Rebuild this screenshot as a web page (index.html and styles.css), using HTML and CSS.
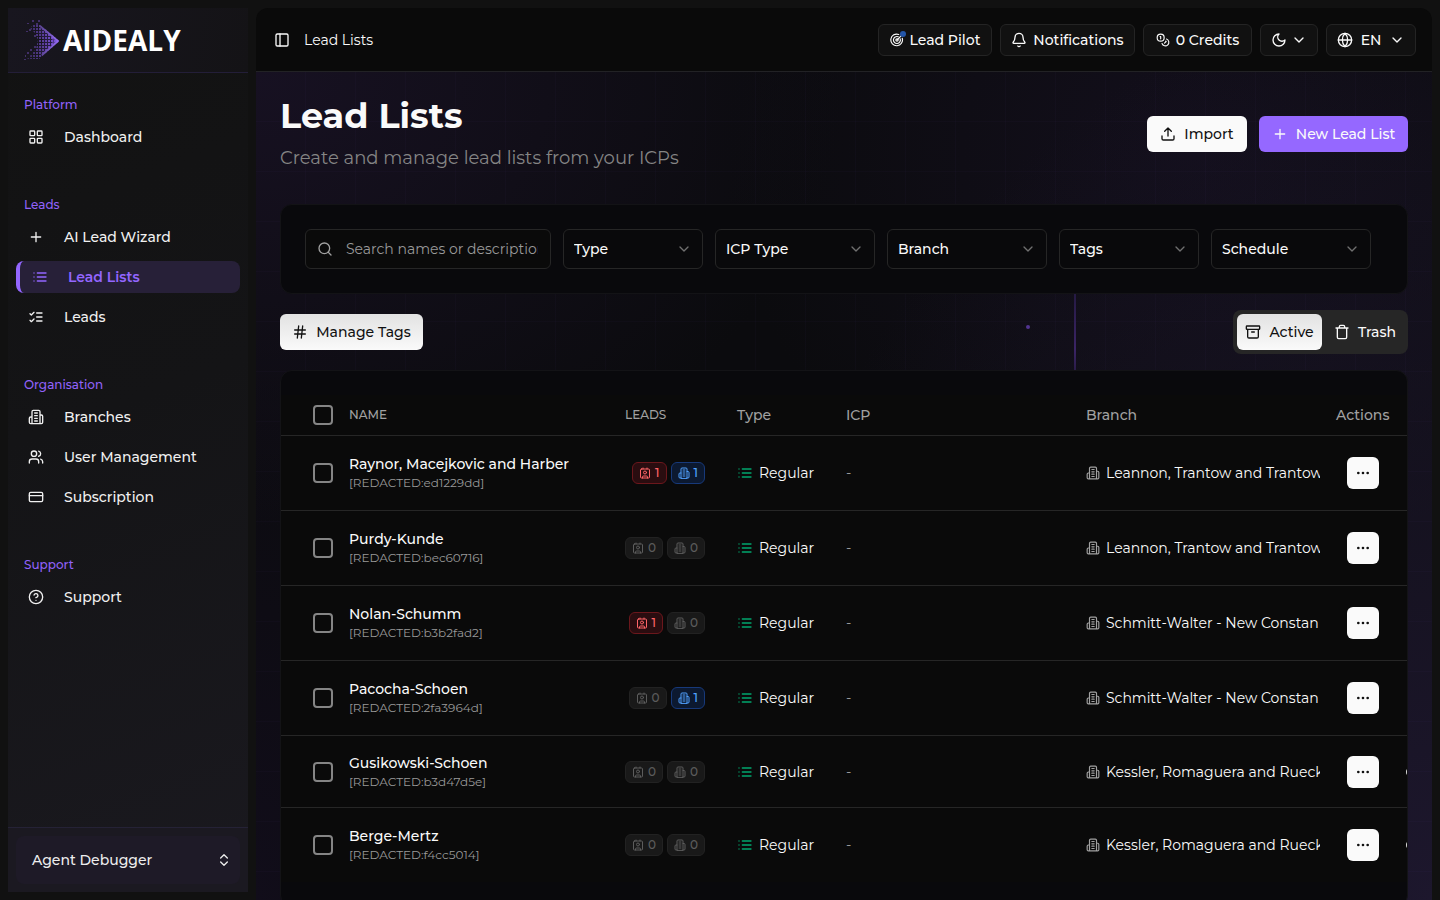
FILE: index.html
```html
<!DOCTYPE html>
<html lang="en">
<head>
<meta charset="utf-8">
<meta name="viewport" content="width=device-width, initial-scale=1">
<title>Lead Lists - Aidealy</title>
<link rel="stylesheet" href="styles.css">
</head>
<body>
<svg class="sprite" aria-hidden="true">
  <symbol id="grid" viewBox="0 0 24 24"><rect x="3" y="3" width="7" height="7" rx="1"/><rect x="14" y="3" width="7" height="7" rx="1"/><rect x="14" y="14" width="7" height="7" rx="1"/><rect x="3" y="14" width="7" height="7" rx="1"/></symbol>
  <symbol id="plus" viewBox="0 0 24 24"><path d="M5 12h14M12 5v14"/></symbol>
  <symbol id="list" viewBox="0 0 24 24"><path d="M3 12h.01M3 18h.01M3 6h.01M8 12h13M8 18h13M8 6h13"/></symbol>
  <symbol id="checks" viewBox="0 0 24 24"><path d="m3 17 2 2 4-4M3 7l2 2 4-4M13 6h8M13 12h8M13 18h8"/></symbol>
  <symbol id="building" viewBox="0 0 24 24"><path d="M6 22V4a2 2 0 0 1 2-2h8a2 2 0 0 1 2 2v18ZM6 12H4a2 2 0 0 0-2 2v6a2 2 0 0 0 2 2h2M18 9h2a2 2 0 0 1 2 2v9a2 2 0 0 1-2 2h-2M10 6h4M10 10h4M10 14h4M10 18h4"/></symbol>
  <symbol id="users" viewBox="0 0 24 24"><path d="M16 21v-2a4 4 0 0 0-4-4H6a4 4 0 0 0-4 4v2"/><circle cx="9" cy="7" r="4"/><path d="M22 21v-2a4 4 0 0 0-3-3.870M16 3.130a4 4 0 0 1 0 7.750"/></symbol>
  <symbol id="card" viewBox="0 0 24 24"><rect x="2" y="5" width="20" height="14" rx="2"/><path d="M2 10h20"/></symbol>
  <symbol id="help" viewBox="0 0 24 24"><circle cx="12" cy="12" r="10"/><path d="M9.09 9a3 3 0 0 1 5.83 1c0 2-3 3-3 3M12 17h.01"/></symbol>
  <symbol id="updown" viewBox="0 0 24 24"><path d="m7 15 5 5 5-5M7 9l5-5 5 5"/></symbol>
  <symbol id="panel" viewBox="0 0 24 24"><rect x="3" y="3" width="18" height="18" rx="2"/><path d="M9 3v18"/></symbol>
  <symbol id="goal" viewBox="0 0 24 24"><path d="M21 9a10 10 0 1 1-6-6.500"/><path d="M17.500 10a6 6 0 1 1-3.500-3.600"/><circle cx="12" cy="12" r="2"/><path d="m12 12 7-7"/></symbol>
  <symbol id="bell" viewBox="0 0 24 24"><path d="M10.268 21a2 2 0 0 0 3.464 0M3.262 15.326A1 1 0 0 0 4 17h16a1 1 0 0 0 .74-1.673C19.410 13.956 18 12.499 18 8A6 6 0 0 0 6 8c0 4.499-1.411 5.956-2.738 7.326"/></symbol>
  <symbol id="coins" viewBox="0 0 24 24"><circle cx="8" cy="8" r="6"/><path d="M18.090 10.370A6 6 0 1 1 10.340 18M7 6h1v4M16.710 13.880l.7.710-2.820 2.820"/></symbol>
  <symbol id="moon" viewBox="0 0 24 24"><path d="M12 3a6 6 0 0 0 9 9 9 9 0 1 1-9-9Z"/></symbol>
  <symbol id="down" viewBox="0 0 24 24"><path d="m6 9 6 6 6-6"/></symbol>
  <symbol id="globe" viewBox="0 0 24 24"><circle cx="12" cy="12" r="10"/><path d="M12 2a14.500 14.500 0 0 0 0 20 14.500 14.500 0 0 0 0-20M2 12h20"/></symbol>
  <symbol id="upload" viewBox="0 0 24 24"><path d="M21 15v4a2 2 0 0 1-2 2H5a2 2 0 0 1-2-2v-4M17 8l-5-5-5 5M12 3v12"/></symbol>
  <symbol id="search" viewBox="0 0 24 24"><circle cx="11" cy="11" r="8"/><path d="m21 21-4.300-4.300"/></symbol>
  <symbol id="hash" viewBox="0 0 24 24"><path d="M4 9h16M4 15h16M10 3 8 21M16 3l-2 18"/></symbol>
  <symbol id="archive" viewBox="0 0 24 24"><rect x="2" y="3" width="20" height="5" rx="1"/><path d="M4 8v11a2 2 0 0 0 2 2h12a2 2 0 0 0 2-2V8M10 12h4"/></symbol>
  <symbol id="trash" viewBox="0 0 24 24"><path d="M3 6h18M19 6v14a2 2 0 0 1-2 2H7a2 2 0 0 1-2-2V6M8 6V4a2 2 0 0 1 2-2h4a2 2 0 0 1 2 2v2"/></symbol>
  <symbol id="contact" viewBox="0 0 24 24"><rect x="3" y="4" width="18" height="18" rx="2"/><path d="M16 2v2M8 2v2M7 22v-2a2 2 0 0 1 2-2h6a2 2 0 0 1 2 2v2"/><circle cx="12" cy="11" r="3"/></symbol>
  <symbol id="dots" viewBox="0 0 24 24"><circle cx="5" cy="12" r="1"/><circle cx="12" cy="12" r="1"/><circle cx="19" cy="12" r="1"/></symbol>
</svg>

<div class="app">
  <aside class="sidebar">
    <div class="brand">
      <svg class="brand-mark" viewBox="0 0 36 42" aria-hidden="true">
        <defs>
          <pattern id="dot" width="3" height="3" patternUnits="userSpaceOnUse"><rect width="2" height="2" fill="#8b5cf6"/></pattern>
          <linearGradient id="fade"><stop offset="0" stop-color="#fff" stop-opacity=".2"/><stop offset=".5" stop-color="#fff" stop-opacity=".55"/><stop offset="1" stop-color="#fff"/></linearGradient>
          <mask id="soft"><rect width="36" height="42" fill="url(#fade)"/></mask>
        </defs>
        <g mask="url(#soft)">
          <path fill="#6d43cf" opacity=".25" d="M16 8 35 22 17 38 13 30 20 22 14 14Z"/>
          <path fill="url(#dot)" d="M15 6 35 22 15 40 3 40 12 30 14 21 11 14 6 9 9 6Z"/>
          <path fill="#8b5cf6" opacity=".5" d="M28 17 35 22 28 27Z"/>
          <path stroke="#9b70ff" fill="none" stroke-dasharray="2 1" d="M16 7 34 22 18 36"/>
        </g>
        <path fill="#7650c4" opacity=".45" d="M8 1h2v2H8zM14 1h2v2h-2zM3 4h2v1H3zM12 4h2v2h-2zM5 10h2v2H5zM2 12h2v1H2zM10 16h2v2h-2zM10 27h2v2h-2zM6 30h2v2H6zM3 33h2v2H3zM1 36h1v2H1zM0 40h2v1H0z"/>
      </svg>
      <span class="brand-name">AIDEALY</span>
    </div>
    <nav class="nav">
      <section class="group"><h2>Platform</h2>
        <a href="#"><svg><use href="#grid"/></svg>Dashboard</a></section>
      <section class="group"><h2>Leads</h2>
        <a href="#"><svg><use href="#plus"/></svg>AI Lead Wizard</a>
        <a href="#" class="active" aria-current="page"><svg><use href="#list"/></svg>Lead Lists</a>
        <a href="#"><svg><use href="#checks"/></svg>Leads</a></section>
      <section class="group"><h2>Organisation</h2>
        <a href="#"><svg><use href="#building"/></svg>Branches</a>
        <a href="#"><svg><use href="#users"/></svg>User Management</a>
        <a href="#"><svg><use href="#card"/></svg>Subscription</a></section>
      <section class="group"><h2>Support</h2>
        <a href="#"><svg><use href="#help"/></svg>Support</a></section>
    </nav>
    <div class="account"><button type="button">Agent Debugger<svg><use href="#updown"/></svg></button></div>
  </aside>

  <main class="main">
    <header class="topbar">
      <button type="button" class="icon-only" aria-label="Toggle sidebar"><svg><use href="#panel"/></svg></button>
      <span class="crumb">Lead Lists</span>
      <div class="tools">
        <button type="button" class="tool pilot"><span class="pilot-icon"><svg><use href="#goal"/></svg></span>Lead Pilot</button>
        <button type="button" class="tool notices"><svg><use href="#bell"/></svg>Notifications</button>
        <button type="button" class="tool credits"><svg><use href="#coins"/></svg>0 Credits</button>
        <button type="button" class="tool theme" aria-label="Theme"><svg><use href="#moon"/></svg><svg><use href="#down"/></svg></button>
        <button type="button" class="tool language"><svg><use href="#globe"/></svg>EN<svg><use href="#down"/></svg></button>
      </div>
    </header>

    <div class="content">
      <span class="beam"></span><span class="spark"></span>
      <div class="heading">
        <div>
          <h1>Lead Lists</h1>
          <p>Create and manage lead lists from your ICPs</p>
        </div>
        <div class="heading-actions">
          <button type="button" class="btn import"><svg><use href="#upload"/></svg>Import</button>
          <button type="button" class="btn primary"><svg><use href="#plus"/></svg>New Lead List</button>
        </div>
      </div>

      <form class="card filters">
        <label class="search"><svg><use href="#search"/></svg><input type="text" aria-label="Search" placeholder="Search names or descriptions"></label>
        <label class="pick narrow"><select aria-label="Type"><option>Type</option></select><svg><use href="#down"/></svg></label>
        <label class="pick"><select aria-label="ICP Type"><option>ICP Type</option></select><svg><use href="#down"/></svg></label>
        <label class="pick"><select aria-label="Branch"><option>Branch</option></select><svg><use href="#down"/></svg></label>
        <label class="pick narrow"><select aria-label="Tags"><option>Tags</option></select><svg><use href="#down"/></svg></label>
        <label class="pick"><select aria-label="Schedule"><option>Schedule</option></select><svg><use href="#down"/></svg></label>
      </form>

      <div class="toolbar">
        <button type="button" class="btn shaded manage"><svg><use href="#hash"/></svg>Manage Tags</button>
        <div class="toggle">
          <button type="button" class="btn shaded" aria-pressed="true"><svg><use href="#archive"/></svg>Active</button>
          <button type="button" class="btn ghost" aria-pressed="false"><svg><use href="#trash"/></svg>Trash</button>
        </div>
      </div>

      <div class="card table-card">
        <table>
          <colgroup><col class="c-check"><col><col class="c-leads"><col class="c-type"><col class="c-icp"><col class="c-branch"><col class="c-actions"><col class="c-more"></colgroup>
          <thead><tr><th class="check"><input type="checkbox" aria-label="Select all"></th><th class="caps">NAME</th><th class="caps">LEADS</th><th>Type</th><th>ICP</th><th>Branch</th><th>Actions</th><th></th></tr></thead>
          <tbody>
            <tr><td class="check"><input type="checkbox" aria-label="Select Raynor, Macejkovic and Harber"></td><td><div class="name">Raynor, Macejkovic and Harber</div><div class="sub">[REDACTED:ed1229dd]</div></td><td><div class="badges"><span class="badge red"><svg><use href="#contact"/></svg>1</span><span class="badge blue"><svg><use href="#building"/></svg>1</span></div></td><td><div class="kind"><svg><use href="#list"/></svg>Regular</div></td><td class="none">-</td><td class="branch"><div><svg><use href="#building"/></svg><span>Leannon, Trantow and Trantow</span></div></td><td class="act"><button type="button" aria-label="Actions"><svg><use href="#dots"/></svg></button></td><td></td></tr>
            <tr><td class="check"><input type="checkbox" aria-label="Select Purdy-Kunde"></td><td><div class="name">Purdy-Kunde</div><div class="sub">[REDACTED:bec60716]</div></td><td><div class="badges"><span class="badge"><svg><use href="#contact"/></svg>0</span><span class="badge"><svg><use href="#building"/></svg>0</span></div></td><td><div class="kind"><svg><use href="#list"/></svg>Regular</div></td><td class="none">-</td><td class="branch"><div><svg><use href="#building"/></svg><span>Leannon, Trantow and Trantow</span></div></td><td class="act"><button type="button" aria-label="Actions"><svg><use href="#dots"/></svg></button></td><td></td></tr>
            <tr><td class="check"><input type="checkbox" aria-label="Select Nolan-Schumm"></td><td><div class="name">Nolan-Schumm</div><div class="sub">[REDACTED:b3b2fad2]</div></td><td><div class="badges"><span class="badge red"><svg><use href="#contact"/></svg>1</span><span class="badge"><svg><use href="#building"/></svg>0</span></div></td><td><div class="kind"><svg><use href="#list"/></svg>Regular</div></td><td class="none">-</td><td class="branch"><div><svg><use href="#building"/></svg><span>Schmitt-Walter - New Constan</span></div></td><td class="act"><button type="button" aria-label="Actions"><svg><use href="#dots"/></svg></button></td><td></td></tr>
            <tr><td class="check"><input type="checkbox" aria-label="Select Pacocha-Schoen"></td><td><div class="name">Pacocha-Schoen</div><div class="sub">[REDACTED:2fa3964d]</div></td><td><div class="badges"><span class="badge"><svg><use href="#contact"/></svg>0</span><span class="badge blue"><svg><use href="#building"/></svg>1</span></div></td><td><div class="kind"><svg><use href="#list"/></svg>Regular</div></td><td class="none">-</td><td class="branch"><div><svg><use href="#building"/></svg><span>Schmitt-Walter - New Constan</span></div></td><td class="act"><button type="button" aria-label="Actions"><svg><use href="#dots"/></svg></button></td><td></td></tr>
            <tr class="short"><td class="check"><input type="checkbox" aria-label="Select Gusikowski-Schoen"></td><td><div class="name">Gusikowski-Schoen</div><div class="sub">[REDACTED:b3d47d5e]</div></td><td><div class="badges"><span class="badge"><svg><use href="#contact"/></svg>0</span><span class="badge"><svg><use href="#building"/></svg>0</span></div></td><td><div class="kind"><svg><use href="#list"/></svg>Regular</div></td><td class="none">-</td><td class="branch"><div><svg><use href="#building"/></svg><span>Kessler, Romaguera and Rueck</span></div></td><td class="act"><button type="button" aria-label="Actions"><svg><use href="#dots"/></svg></button></td><td class="more"><i></i></td></tr>
            <tr class="last"><td class="check"><input type="checkbox" aria-label="Select Berge-Mertz"></td><td><div class="name">Berge-Mertz</div><div class="sub">[REDACTED:f4cc5014]</div></td><td><div class="badges"><span class="badge"><svg><use href="#contact"/></svg>0</span><span class="badge"><svg><use href="#building"/></svg>0</span></div></td><td><div class="kind"><svg><use href="#list"/></svg>Regular</div></td><td class="none">-</td><td class="branch"><div><svg><use href="#building"/></svg><span>Kessler, Romaguera and Rueck</span></div></td><td class="act"><button type="button" aria-label="Actions"><svg><use href="#dots"/></svg></button></td><td class="more"><i></i></td></tr>
          </tbody>
        </table>
      </div>
    </div>
  </main>
</div>
</body>
</html>
```
FILE: styles.css
```css
* { box-sizing: border-box; }
body {
  margin: 0;
  background: #111;
  color: #fafafa;
  font: 400 14px/20px Montserrat, Inter, "Liberation Sans", sans-serif;
}
h1, h2, p { margin: 0; }
button, input, select { font: inherit; color: inherit; }
button { cursor: pointer; }
a { color: inherit; text-decoration: none; }
svg {
  width: 16px;
  height: 16px;
  flex: none;
  fill: none;
  stroke: currentColor;
  stroke-width: 2;
  stroke-linecap: round;
  stroke-linejoin: round;
}
.sprite { position: absolute; width: 0; height: 0; }

.app { display: flex; height: 100vh; overflow: hidden; }

/* Sidebar */
.sidebar {
  display: flex;
  flex-direction: column;
  flex: none;
  width: 240px;
  margin: 8px;
  background: linear-gradient(160deg, #121212, #141416 45%, #1a191f);
}
.brand {
  display: flex;
  align-items: center;
  gap: 3px;
  height: 65px;
  padding: 0 16px;
  border-bottom: 1px solid #231e38;
  background: linear-gradient(100deg, #18161f, #141316);
}
.brand-mark { width: 36px; height: 42px; stroke: none; }
.brand-name { font: 700 28px/32px "Open Sans", "Noto Sans", sans-serif; color: #fff; }
.nav {
  display: flex;
  flex-direction: column;
  flex: 1;
  gap: 36px;
  padding: 16px 8px;
}
.group { display: flex; flex-direction: column; gap: 8px; }
.group h2 {
  height: 32px;
  margin-bottom: -8px;
  padding: 0 8px;
  color: #9162fa;
  font-size: 12px;
  line-height: 32px;
  font-weight: 500;
}
.group a {
  display: flex;
  align-items: center;
  gap: 20px;
  height: 32px;
  padding: 0 12px;
  border-radius: 8px;
  font-weight: 500;
  color: #f0f0f0;
}
.group .active {
  border-left: 4px solid #9366ff;
  background: #272038;
  color: #9366ff;
  font-weight: 600;
}
.account { padding: 8px; border-top: 1px solid #252236; background: #1b1921; }
.account button {
  display: flex;
  align-items: center;
  justify-content: space-between;
  width: 100%;
  height: 48px;
  padding: 0 8px 0 16px;
  border: 0;
  border-radius: 8px;
  background: #1e1a27;
  font-weight: 500;
  color: #ededed;
}

/* Main column */
.main {
  display: flex;
  flex-direction: column;
  flex: 1;
  min-width: 0;
  margin: 8px 8px 0 0;
  border-radius: 12px 12px 0 0;
  overflow: hidden;
  background: #0a0a0a;
}
.topbar {
  display: flex;
  align-items: center;
  flex: none;
  height: 64px;
  padding: 0 16px;
  border-bottom: 1px solid #222225;
}
.icon-only { display: flex; padding: 2px; border: 0; background: none; }
.crumb { margin-left: 12px; }
.tools { display: flex; gap: 8px; margin-left: auto; }
.tool {
  display: flex;
  align-items: center;
  justify-content: center;
  gap: 6px;
  height: 32px;
  padding: 0;
  border: 1px solid #242424;
  border-radius: 6px;
  background: #111;
  font-weight: 500;
}
.tool svg { width: 16px; height: 16px; }
.pilot { width: 114px; }
.notices { width: 135px; }
.credits { width: 109px; }
.credits svg, .pilot svg { width: 14px; height: 14px; }
.theme { width: 58px; gap: 4px; }
.language { width: 90px; gap: 8px; }
.pilot-icon { position: relative; display: flex; }
.pilot-icon::after {
  content: "";
  position: absolute;
  top: -2px;
  right: -2px;
  width: 6px;
  height: 6px;
  border-radius: 50%;
  background: #2456a8;
}

.content {
  position: relative;
  flex: 1;
  min-height: 0;
  overflow: hidden;
  padding: 24px;
  background:
    repeating-linear-gradient(90deg, transparent 0 49px, #8b5cf606 49px 50px),
    repeating-linear-gradient(180deg, transparent 0 49px, #8b5cf606 49px 50px),
    radial-gradient(ellipse 50% 55% at 0 0, #171122, transparent),
    radial-gradient(ellipse 60% 110% at 100% 100%, #1d172d, transparent),
    radial-gradient(ellipse 40% 50% at 80% 10%, #130f1c, transparent),
    radial-gradient(ellipse 20% 70% at 0 100%, #110d1a, transparent),
    #0b0b0e;
}
.beam {
  position: absolute;
  top: 200px;
  right: 356px;
  width: 2px;
  height: 110px;
  background: linear-gradient(#1d1636, #3b2466 70%, #211838);
}
.spark {
  position: absolute;
  top: 253px;
  right: 402px;
  width: 4px;
  height: 4px;
  border-radius: 50%;
  background: #523491;
}
.heading { display: flex; align-items: center; justify-content: space-between; }
.heading h1 { font-size: 35px; line-height: 40px; font-weight: 700; }
.heading p { margin-top: 8px; font-size: 18px; line-height: 28px; color: #858585; }
.heading-actions { display: flex; gap: 12px; }
.btn {
  display: flex;
  align-items: center;
  justify-content: center;
  gap: 8px;
  height: 36px;
  padding: 0 8px;
  border: 0;
  border-radius: 6px;
  background: #fafafa;
  color: #111;
  font-weight: 500;
}
.import { width: 100px; }
.primary { width: 149px; background: #9568ff; color: #fafafa; }
.shaded { background: linear-gradient(#e2e2e2, #fafafa); }
.manage { width: 143px; }
.ghost { background: none; color: #fafafa; }

.card {
  position: relative;
  border: 1px solid #131316;
  border-radius: 12px;
  background: #09090c;
}
.filters { display: flex; gap: 12px; margin-top: 32px; padding: 24px 36px 24px 24px; }
.search { position: relative; flex: 1; min-width: 0; }
.search svg { position: absolute; left: 12px; top: 12px; color: #a1a1a1; }
.search input {
  display: block;
  width: 100%;
  height: 40px;
  padding: 0 12px 0 40px;
  border: 1px solid #262626;
  border-radius: 6px;
  background: #0a0a0a;
}
.search input::placeholder { color: #999; opacity: 1; }
.pick { position: relative; width: 160px; }
.narrow { width: 140px; }
.pick select {
  appearance: none;
  display: block;
  width: 100%;
  height: 40px;
  padding: 0 32px 0 10px;
  border: 1px solid #262626;
  border-radius: 6px;
  background: #09090b;
  font-weight: 500;
}
.pick svg { position: absolute; right: 11px; top: 12px; color: #707070; pointer-events: none; }

.toolbar { display: flex; align-items: center; justify-content: space-between; margin: 16px 0; }
.toggle { display: flex; gap: 4px; padding: 4px; border-radius: 8px; background: #262626; }
.toggle .shaded { width: 85px; }
.toggle .ghost { width: 78px; }

/* Lists table */
.table-card { padding: 24px 0; overflow: hidden; }
table {
  width: calc(100% + 120px);
  border-collapse: separate;
  border-spacing: 0;
  table-layout: fixed;
  background: #0a0a0a;
}
.c-check { width: 52px; }
.c-leads { width: 112px; }
.c-type { width: 109px; }
.c-icp { width: 240px; }
.c-branch { width: 250px; }
.c-actions { width: 86px; }
.c-more { width: 121px; }
th, td { padding: 0 16px; text-align: left; border-bottom: 1px solid #262626; }
th { height: 41px; color: #a1a1a1; font-weight: 500; }
.caps { font-size: 12px; }
td { height: 75px; }
.short td { height: 72px; }
.last td { height: 74px; border-bottom: 0; }
.check { padding: 0 0 0 32px; }
.check input {
  appearance: none;
  display: block;
  width: 20px;
  height: 20px;
  margin: 0;
  border: 2px solid #858585;
  border-radius: 4px;
}
.name { font-weight: 500; white-space: nowrap; }
.sub { font-size: 12px; line-height: 18px; color: #999; }
.badges { display: flex; justify-content: flex-end; gap: 4px; }
.badge {
  display: flex;
  align-items: center;
  gap: 4px;
  height: 22px;
  padding: 0 6px;
  border: 1px solid #222;
  border-radius: 6px;
  background: #191919;
  color: #5c5c5c;
  font-size: 12px;
  font-weight: 500;
}
.badge svg { width: 12px; height: 12px; }
.red { border-color: #6b171c; background: #2a0d10; color: #ff6467; }
.blue { border-color: #17397a; background: #0c1930; color: #51a2ff; }
.kind { display: flex; align-items: center; gap: 6px; }
.kind svg { color: #00a66e; }
.none { color: #999; }
.branch { padding-right: 0; }
.branch div { display: flex; align-items: center; gap: 6px; overflow: hidden; white-space: nowrap; }
.branch svg { width: 14px; height: 14px; color: #a1a1a1; }
.act button {
  display: flex;
  align-items: center;
  justify-content: center;
  width: 32px;
  height: 32px;
  margin: 0 auto;
  padding: 0;
  border: 0;
  border-radius: 6px;
  background: #fafafa;
  color: #111;
}
.more { padding: 0; }
.more i { display: block; width: 8px; height: 8px; border: 2px solid #ddd; border-radius: 50%; }
```
